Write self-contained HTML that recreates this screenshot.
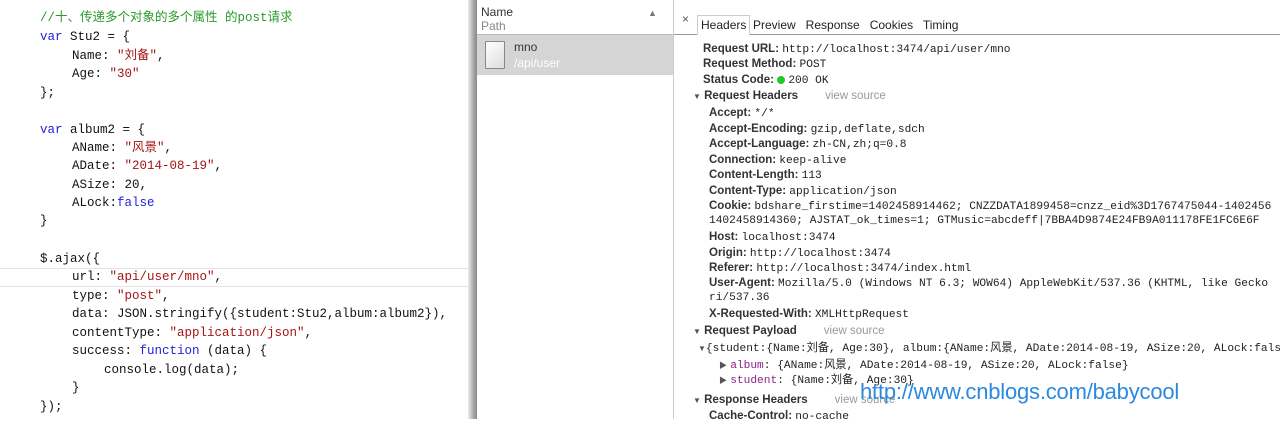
<!DOCTYPE html>
<html><head><meta charset="utf-8"><style>
body{margin:0;width:1280px;height:419px;overflow:hidden;background:#fff;position:relative;font-family:"Liberation Sans","Noto Sans CJK SC",sans-serif}
.c{position:absolute;left:0;font-family:"Liberation Mono","Noto Sans CJK SC",monospace;font-size:12.5px;line-height:18px;white-space:pre;color:#111}
.k{color:#2222dd}.s{color:#a31515}.g{color:#2a9a2a}
.r{position:absolute;white-space:pre;font-size:11.5px;line-height:16px;color:#222}
.r b{font-weight:bold;color:#333}
.m{font-family:"Liberation Mono","Noto Sans CJK SC",monospace;font-size:11.2px;color:#222}
.v{color:#999;margin-left:27px;font-weight:normal}
.p{color:#8a1f8a}
.t{font-size:8px;color:#555}
</style></head><body>
<div style="position:absolute;left:0;top:268px;width:470px;height:17px;border-top:1px solid #e4e4e4;border-bottom:1px solid #e4e4e4"></div>
<div class="c" style="top:9px"><span style="padding-left:40px"></span><span class="g">//十、传递多个对象的多个属性 的post请求</span></div>
<div class="c" style="top:28px;padding-left:40px"><span class="k">var</span> Stu2 = {</div>
<div class="c" style="top:47px;padding-left:72px">Name: <span class="s">"刘备"</span>,</div>
<div class="c" style="top:65px;padding-left:72px">Age: <span class="s">"30"</span></div>
<div class="c" style="top:84px;padding-left:40px">};</div>
<div class="c" style="top:121px;padding-left:40px"><span class="k">var</span> album2 = {</div>
<div class="c" style="top:139px;padding-left:72px">AName: <span class="s">"风景"</span>,</div>
<div class="c" style="top:157px;padding-left:72px">ADate: <span class="s">"2014-08-19"</span>,</div>
<div class="c" style="top:176px;padding-left:72px">ASize: 20,</div>
<div class="c" style="top:194px;padding-left:72px">ALock:<span class="k">false</span></div>
<div class="c" style="top:212px;padding-left:40px">}</div>
<div class="c" style="top:250px;padding-left:40px">$.ajax({</div>
<div class="c" style="top:268px;padding-left:72px">url: <span class="s">"api/user/mno"</span>,</div>
<div class="c" style="top:287px;padding-left:72px">type: <span class="s">"post"</span>,</div>
<div class="c" style="top:305px;padding-left:72px">data: JSON.stringify({student:Stu2,album:album2}),</div>
<div class="c" style="top:324px;padding-left:72px">contentType: <span class="s">"application/json"</span>,</div>
<div class="c" style="top:342px;padding-left:72px">success: <span class="k">function</span> (data) {</div>
<div class="c" style="top:361px;padding-left:104px">console.log(data);</div>
<div class="c" style="top:379px;padding-left:72px">}</div>
<div class="c" style="top:398px;padding-left:40px">});</div>
<div style="position:absolute;left:468px;top:0;width:9px;height:419px;background:linear-gradient(90deg,#eee,#a8a8a8 60%,#888)"></div>
<div style="position:absolute;left:477px;top:0;width:196px;height:419px;border-right:1px solid #ccc;background:#fff"></div>
<div style="position:absolute;left:477px;top:34px;width:196px;border-top:1px solid #bbb"></div>
<div style="position:absolute;left:481px;top:5px;font-size:12px;line-height:14px;color:#333">Name<br><span style="color:#888">Path</span></div>
<div style="position:absolute;left:648px;top:8px;font-size:9px;color:#777">▲</div>
<div style="position:absolute;left:477px;top:35px;width:196px;height:40px;background:#d5d5d5"></div>
<div style="position:absolute;left:485px;top:41px;width:18px;height:26px;border:1px solid #888;background:linear-gradient(135deg,#fff,#ddd);border-radius:1px"></div>
<div style="position:absolute;left:514px;top:40px;font-size:12px;color:#333">mno</div>
<div style="position:absolute;left:514px;top:56px;font-size:12px;color:#fff">/api/user</div>
<div style="position:absolute;left:674px;top:34px;width:606px;border-top:1px solid #999"></div>
<div style="position:absolute;left:682px;top:12px;font-size:12px;color:#555">×</div>
<div style="position:absolute;left:697px;top:15px;height:19px;border:1px solid #ccc;border-bottom:none;background:#fff;font-size:12px;line-height:19px;padding:0 3px;color:#222">Headers</div>
<div style="position:absolute;left:753px;top:16px;font-size:12px;line-height:19px;color:#222">Preview&nbsp;&nbsp; Response&nbsp;&nbsp; Cookies&nbsp;&nbsp; Timing</div>
<div class="r" style="left:703px;top:41px"><b>Request URL:</b> <span class="m">http://localhost:3474/api/user/mno</span></div>
<div class="r" style="left:703px;top:56px"><b>Request Method:</b> <span class="m">POST</span></div>
<div class="r" style="left:703px;top:72px"><b>Status Code:</b> <span style="display:inline-block;width:8px;height:8px;border-radius:50%;background:#2c2;vertical-align:-1px"></span> <span class="m">200 OK</span></div>
<div class="r" style="left:693px;top:88px"><span class="t">▼</span> <b>Request Headers</b><span class="v">view source</span></div>
<div class="r" style="left:709px;top:105px"><b>Accept:</b> <span class="m">*/*</span></div>
<div class="r" style="left:709px;top:121px"><b>Accept-Encoding:</b> <span class="m">gzip,deflate,sdch</span></div>
<div class="r" style="left:709px;top:136px"><b>Accept-Language:</b> <span class="m">zh-CN,zh;q=0.8</span></div>
<div class="r" style="left:709px;top:152px"><b>Connection:</b> <span class="m">keep-alive</span></div>
<div class="r" style="left:709px;top:167px"><b>Content-Length:</b> <span class="m">113</span></div>
<div class="r" style="left:709px;top:183px"><b>Content-Type:</b> <span class="m">application/json</span></div>
<div class="r" style="left:709px;top:198px"><b>Cookie:</b> <span class="m">bdshare_firstime=1402458914462; CNZZDATA1899458=cnzz_eid%3D1767475044-1402456</span></div>
<div class="r m" style="left:709px;top:213px">1402458914360; AJSTAT_ok_times=1; GTMusic=abcdeff|7BBA4D9874E24FB9A011178FE1FC6E6F</div>
<div class="r" style="left:709px;top:229px"><b>Host:</b> <span class="m">localhost:3474</span></div>
<div class="r" style="left:709px;top:245px"><b>Origin:</b> <span class="m">http://localhost:3474</span></div>
<div class="r" style="left:709px;top:260px"><b>Referer:</b> <span class="m">http://localhost:3474/index.html</span></div>
<div class="r" style="left:709px;top:275px"><b>User-Agent:</b> <span class="m">Mozilla/5.0 (Windows NT 6.3; WOW64) AppleWebKit/537.36 (KHTML, like Gecko</span></div>
<div class="r m" style="left:709px;top:290px">ri/537.36</div>
<div class="r" style="left:709px;top:306px"><b>X-Requested-With:</b> <span class="m">XMLHttpRequest</span></div>
<div class="r" style="left:693px;top:323px"><span class="t">▼</span> <b>Request Payload</b><span class="v">view source</span></div>
<div class="r" style="left:698px;top:340px"><span class="t">▼</span><span class="m">{student:{Name:刘备, Age:30}, album:{AName:风景, ADate:2014-08-19, ASize:20, ALock:false}}</span></div>
<div class="r" style="left:719px;top:357px"><span class="t">▶</span> <span class="m"><span class="p">album</span>: {AName:风景, ADate:2014-08-19, ASize:20, ALock:false}</span></div>
<div class="r" style="left:719px;top:372px"><span class="t">▶</span> <span class="m"><span class="p">student</span>: {Name:刘备, Age:30}</span></div>
<div class="r" style="left:693px;top:392px"><span class="t">▼</span> <b>Response Headers</b><span class="v">view source</span></div>
<div class="r" style="left:709px;top:408px"><b>Cache-Control:</b> <span class="m">no-cache</span></div>
<div style="position:absolute;left:860px;top:379px;font-size:22px;color:#2a8ae0;white-space:nowrap;letter-spacing:-0.2px">http://www.cnblogs.com/babycool</div>
</body></html>
